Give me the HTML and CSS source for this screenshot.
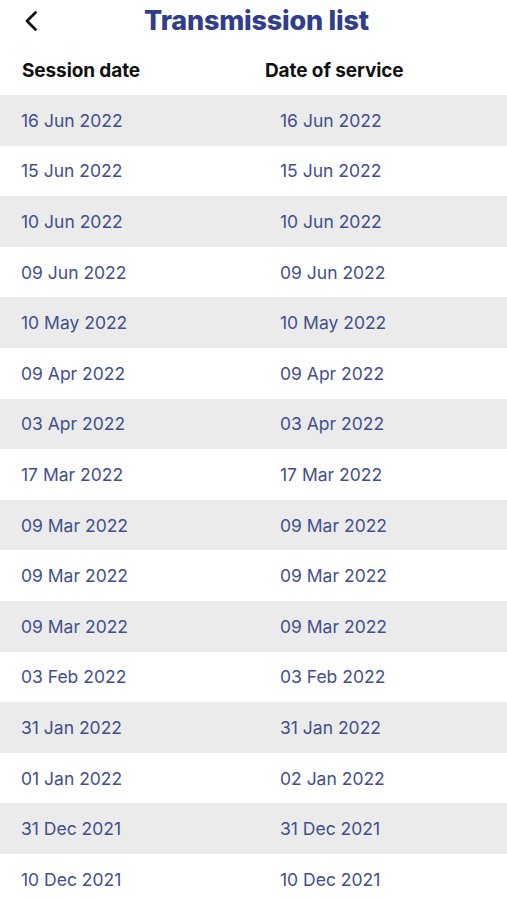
FILE: index.html
```html
<!DOCTYPE html>
<html>
<head>
<meta charset="utf-8">
<link rel="stylesheet" href="styles.css">
</head>
<body>
<div class="topbar">
  <div class="back">
    <svg width="16" height="22" viewBox="0 0 16 22"><path d="M12.5 2.5 L4 11 L12.5 19.5" fill="none" stroke="#111" stroke-width="2.8" stroke-linecap="round" stroke-linejoin="round"/></svg>
  </div>
  <h1 class="title">Transmission list</h1>
  <div></div>
</div>
<div class="cols">
  <div class="col-a">Session date</div>
  <div class="col-b">Date of service</div>
</div>
<div class="list">
  <div class="row"><span class="c1">16 Jun 2022</span><span class="c2">16 Jun 2022</span></div>
  <div class="row"><span class="c1">15 Jun 2022</span><span class="c2">15 Jun 2022</span></div>
  <div class="row"><span class="c1">10 Jun 2022</span><span class="c2">10 Jun 2022</span></div>
  <div class="row"><span class="c1">09 Jun 2022</span><span class="c2">09 Jun 2022</span></div>
  <div class="row"><span class="c1">10 May 2022</span><span class="c2">10 May 2022</span></div>
  <div class="row"><span class="c1">09 Apr 2022</span><span class="c2">09 Apr 2022</span></div>
  <div class="row"><span class="c1">03 Apr 2022</span><span class="c2">03 Apr 2022</span></div>
  <div class="row"><span class="c1">17 Mar 2022</span><span class="c2">17 Mar 2022</span></div>
  <div class="row"><span class="c1">09 Mar 2022</span><span class="c2">09 Mar 2022</span></div>
  <div class="row"><span class="c1">09 Mar 2022</span><span class="c2">09 Mar 2022</span></div>
  <div class="row"><span class="c1">09 Mar 2022</span><span class="c2">09 Mar 2022</span></div>
  <div class="row"><span class="c1">03 Feb 2022</span><span class="c2">03 Feb 2022</span></div>
  <div class="row"><span class="c1">31 Jan 2022</span><span class="c2">31 Jan 2022</span></div>
  <div class="row"><span class="c1">01 Jan 2022</span><span class="c2">02 Jan 2022</span></div>
  <div class="row"><span class="c1">31 Dec 2021</span><span class="c2">31 Dec 2021</span></div>
  <div class="row"><span class="c1">10 Dec 2021</span><span class="c2">10 Dec 2021</span></div>
</div>
</body>
</html>
```
FILE: styles.css
```css
html, body {
  margin: 0;
  padding: 0;
  background: #fff;
}
body {
  font-family: Inter, "Noto Sans", sans-serif;
  overflow: hidden;
}
.topbar {
  display: grid;
  grid-template-columns: 1fr auto 1fr;
  align-items: center;
  height: 42px;
}
.back {
  padding-left: 23px;
  display: flex;
  align-items: center;
  height: 42px;
}
.title {
  margin: 0;
  font-size: 27px;
  font-weight: 800;
  color: #2f3d8c;
  letter-spacing: -0.2px;
  line-height: 42px;
  padding-left: 6px;
}
.cols {
  display: flex;
  height: 53px;
  padding-top: 3px;
  box-sizing: border-box;
  align-items: center;
  font-size: 19px;
  font-weight: 700;
  color: #111;
  letter-spacing: -0.1px;
}
.col-a {
  width: 265px;
  padding-left: 22px;
  box-sizing: border-box;
}
.col-b {
  flex: 1;
}
.row {
  display: flex;
  align-items: center;
  height: 50.6px;
  font-size: 17.5px;
  color: #434e8e;
}
.row:nth-child(odd) {
  background: #ebebeb;
}
.c1 {
  width: 280px;
  padding-left: 21px;
  box-sizing: border-box;
}
.c2 {
  flex: 1;
}
```
